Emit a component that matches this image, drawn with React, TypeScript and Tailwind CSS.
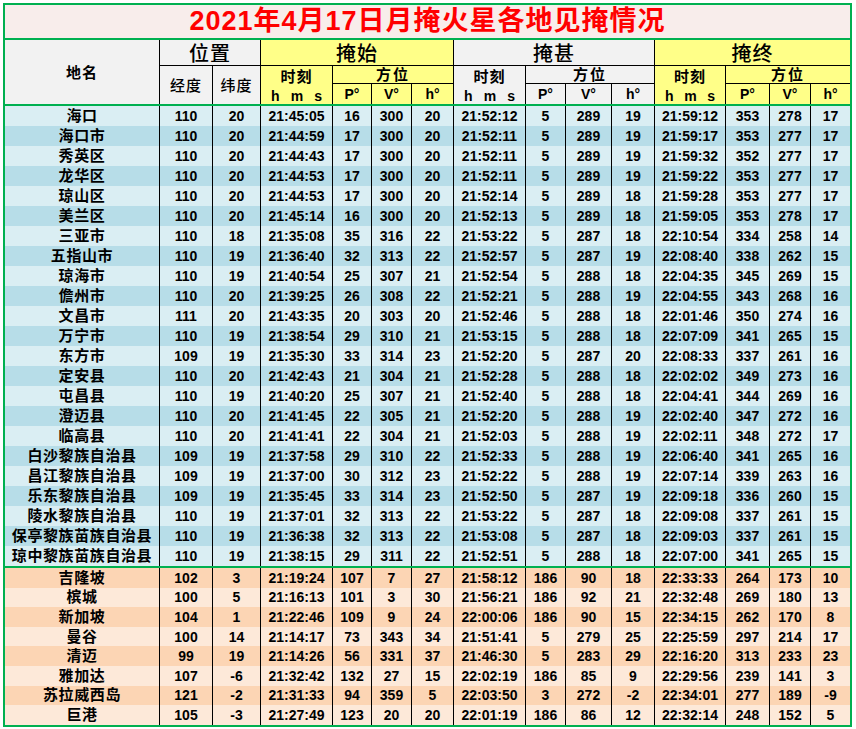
import React from 'react';

type Row = [string, ...(string | number)[]];

const hainan: Row[] = [
    ['海口', 110, 20, '21:45:05', 16, 300, 20, '21:52:12', 5, 289, 19, '21:59:12', 353, 278, 17],
    ['海口市', 110, 20, '21:44:59', 17, 300, 20, '21:52:11', 5, 289, 19, '21:59:17', 353, 277, 17],
    ['秀英区', 110, 20, '21:44:43', 17, 300, 20, '21:52:11', 5, 289, 19, '21:59:32', 352, 277, 17],
    ['龙华区', 110, 20, '21:44:53', 17, 300, 20, '21:52:11', 5, 289, 19, '21:59:22', 353, 277, 17],
    ['琼山区', 110, 20, '21:44:53', 17, 300, 20, '21:52:14', 5, 289, 18, '21:59:28', 353, 277, 17],
    ['美兰区', 110, 20, '21:45:14', 16, 300, 20, '21:52:13', 5, 289, 18, '21:59:05', 353, 278, 17],
    ['三亚市', 110, 18, '21:35:08', 35, 316, 22, '21:53:22', 5, 287, 18, '22:10:54', 334, 258, 14],
    ['五指山市', 110, 19, '21:36:40', 32, 313, 22, '21:52:57', 5, 287, 19, '22:08:40', 338, 262, 15],
    ['琼海市', 110, 19, '21:40:54', 25, 307, 21, '21:52:54', 5, 288, 18, '22:04:35', 345, 269, 15],
    ['儋州市', 110, 20, '21:39:25', 26, 308, 22, '21:52:21', 5, 288, 19, '22:04:55', 343, 268, 16],
    ['文昌市', 111, 20, '21:43:35', 20, 303, 20, '21:52:46', 5, 288, 18, '22:01:46', 350, 274, 16],
    ['万宁市', 110, 19, '21:38:54', 29, 310, 21, '21:53:15', 5, 288, 18, '22:07:09', 341, 265, 15],
    ['东方市', 109, 19, '21:35:30', 33, 314, 23, '21:52:20', 5, 287, 20, '22:08:33', 337, 261, 16],
    ['定安县', 110, 20, '21:42:43', 21, 304, 21, '21:52:28', 5, 288, 18, '22:02:02', 349, 273, 16],
    ['屯昌县', 110, 19, '21:40:20', 25, 307, 21, '21:52:40', 5, 288, 18, '22:04:41', 344, 269, 16],
    ['澄迈县', 110, 20, '21:41:45', 22, 305, 21, '21:52:20', 5, 288, 19, '22:02:40', 347, 272, 16],
    ['临高县', 110, 20, '21:41:41', 22, 304, 21, '21:52:03', 5, 288, 19, '22:02:11', 348, 272, 17],
    ['白沙黎族自治县', 109, 19, '21:37:58', 29, 310, 22, '21:52:33', 5, 288, 19, '22:06:40', 341, 265, 16],
    ['昌江黎族自治县', 109, 19, '21:37:00', 30, 312, 23, '21:52:22', 5, 288, 19, '22:07:14', 339, 263, 16],
    ['乐东黎族自治县', 109, 19, '21:35:45', 33, 314, 23, '21:52:50', 5, 287, 19, '22:09:18', 336, 260, 15],
    ['陵水黎族自治县', 110, 19, '21:37:01', 32, 313, 22, '21:53:22', 5, 287, 18, '22:09:08', 337, 261, 15],
    ['保亭黎族苗族自治县', 110, 19, '21:36:38', 32, 313, 22, '21:53:08', 5, 287, 18, '22:09:03', 337, 261, 15],
    ['琼中黎族苗族自治县', 110, 19, '21:38:15', 29, 311, 22, '21:52:51', 5, 288, 18, '22:07:00', 341, 265, 15],
];

const abroad: Row[] = [
    ['吉隆坡', 102, 3, '21:19:24', 107, 7, 27, '21:58:12', 186, 90, 18, '22:33:33', 264, 173, 10],
    ['槟城', 100, 5, '21:16:13', 101, 3, 30, '21:56:21', 186, 92, 21, '22:32:48', 269, 180, 13],
    ['新加坡', 104, 1, '21:22:46', 109, 9, 24, '22:00:06', 186, 90, 15, '22:34:15', 262, 170, 8],
    ['曼谷', 100, 14, '21:14:17', 73, 343, 34, '21:51:41', 5, 279, 25, '22:25:59', 297, 214, 17],
    ['清迈', 99, 19, '21:14:26', 56, 331, 37, '21:46:30', 5, 283, 29, '22:16:20', 313, 233, 23],
    ['雅加达', 107, -6, '21:32:42', 132, 27, 15, '22:02:19', 186, 85, 9, '22:29:56', 239, 141, 3],
    ['苏拉威西岛', 121, -2, '21:31:33', 94, 359, 5, '22:03:50', 3, 272, -2, '22:34:01', 277, 189, -9],
    ['巨港', 105, -3, '21:27:49', 123, 20, 20, '22:01:19', 186, 86, 12, '22:32:14', 248, 152, 5],
];

// column widths measured off the sheet, 1px left rule included
const COLS = 'grid-cols-[154px_53px_48px_72px_39px_40px_42px_72px_40px_46px_43px_71px_44px_41px_40px]';
const CJK = "font-['Noto_Sans_CJK_SC',sans-serif]";
const NUM = "font-['Liberation_Sans','Noto_Sans_CJK_SC',sans-serif]";
const GRAY = 'bg-[#f2f2f2]';
const YELLOW = 'bg-[#ffff88]';

const DataRow = ({ row, bg, h }: { row: Row; bg: string; h: string }) => (
    <div className={`grid ${COLS} ${bg} ${h}`}>
        <div className={`${CJK} flex items-center justify-center pb-[3px] text-[15px] font-bold tracking-[0.6px] text-black leading-none`}>
            {row[0]}
        </div>
        {row.slice(1).map((v, i) => (
            <div key={i} className={`${NUM} flex items-center justify-center border-l border-black text-[14px] font-bold text-black leading-none`}>
                {v}
            </div>
        ))}
    </div>
);

const GroupHead = ({ label, bg, col }: { label: string; bg: string; col: string }) => (
    <div className={`${col} row-start-1 ${bg} ${CJK} flex items-center justify-center border-l border-b border-black text-[20px] font-medium tracking-[1px] text-black leading-none`}>
        {label}
    </div>
);

const TimeHead = ({ bg, col }: { bg: string; col: string }) => (
    <div className={`${col} row-start-2 row-span-2 ${bg} flex flex-col border-l border-black pt-[2px]`}>
        <div className={`${CJK} text-center text-[15px] font-bold tracking-[1px] leading-[15px] text-black`}>时刻</div>
        <div className={`${NUM} mt-[6px] flex justify-between px-[10px] text-[14px] font-bold leading-[14px] text-black`}>
            <span>h</span><span>m</span><span>s</span>
        </div>
    </div>
);

const AzHead = ({ bg, col, cols }: { bg: string; col: string; cols: string[] }) => (
    <>
        <div className={`${col} row-start-2 ${bg} ${CJK} flex items-center justify-center border-l border-b border-black pb-[2px] text-[15px] font-bold tracking-[2px] leading-none text-black`}>
            方位
        </div>
        {cols.map((c, i) => (
            <div key={i} className={`${c} row-start-3 ${bg} ${NUM} flex items-center justify-center border-l border-black text-[14px] font-bold leading-none text-black`}>
                {['P°', 'V°', 'h°'][i]}
            </div>
        ))}
    </>
);

export default function App() {
    return (
        <div className="min-h-[729px] bg-white pt-[3px] pl-[3px]">
            <div className="w-[849px] border-2 border-[#00b050]">
                <div className={`flex h-[35px] items-center justify-center border-b-2 border-[#00b050] bg-[#f8edeb] ${NUM} text-[27px] font-bold tracking-[1px] text-[#ff0000] leading-none`}>
                    2021年4月17日月掩火星各地见掩情况
                </div>

                <div className={`grid ${COLS} grid-rows-[26px_18px_20px] border-b-2 border-[#00b050]`}>
                    <div className={`col-start-1 row-start-1 row-span-3 ${GRAY} ${CJK} flex items-center justify-center text-[15px] font-bold tracking-[1px] text-black`}>
                        地名
                    </div>
                    <GroupHead label="位置" bg={GRAY} col="col-start-2 col-span-2" />
                    <GroupHead label="掩始" bg={YELLOW} col="col-start-4 col-span-4" />
                    <GroupHead label="掩甚" bg={GRAY} col="col-start-8 col-span-4" />
                    <GroupHead label="掩终" bg={YELLOW} col="col-start-12 col-span-4" />

                    <div className={`col-start-2 row-start-2 row-span-2 ${GRAY} ${CJK} flex items-center justify-center border-l border-black text-[15px] font-medium tracking-[1px] text-black`}>
                        经度
                    </div>
                    <div className={`col-start-3 row-start-2 row-span-2 ${GRAY} ${CJK} flex items-center justify-center border-l border-black text-[15px] font-medium tracking-[1px] text-black`}>
                        纬度
                    </div>

                    <TimeHead bg={YELLOW} col="col-start-4" />
                    <AzHead bg={YELLOW} col="col-start-5 col-span-3" cols={['col-start-5', 'col-start-6', 'col-start-7']} />
                    <TimeHead bg={GRAY} col="col-start-8" />
                    <AzHead bg={GRAY} col="col-start-9 col-span-3" cols={['col-start-9', 'col-start-10', 'col-start-11']} />
                    <TimeHead bg={YELLOW} col="col-start-12" />
                    <AzHead bg={YELLOW} col="col-start-13 col-span-3" cols={['col-start-13', 'col-start-14', 'col-start-15']} />
                </div>

                <div>
                    {hainan.map((r, i) => (
                        <DataRow key={r[0]} row={r} h="h-[20px]" bg={i % 2 === 0 ? 'bg-[#daeef3]' : 'bg-[#b7dde8]'} />
                    ))}
                </div>
                <div className="border-t-2 border-[#00b050]">
                    {abroad.map((r, i) => (
                        <DataRow key={r[0]} row={r} h="h-[19.6px]" bg={i % 2 === 0 ? 'bg-[#fcd5b4]' : 'bg-[#fde9d9]'} />
                    ))}
                </div>
            </div>
        </div>
    );
}
